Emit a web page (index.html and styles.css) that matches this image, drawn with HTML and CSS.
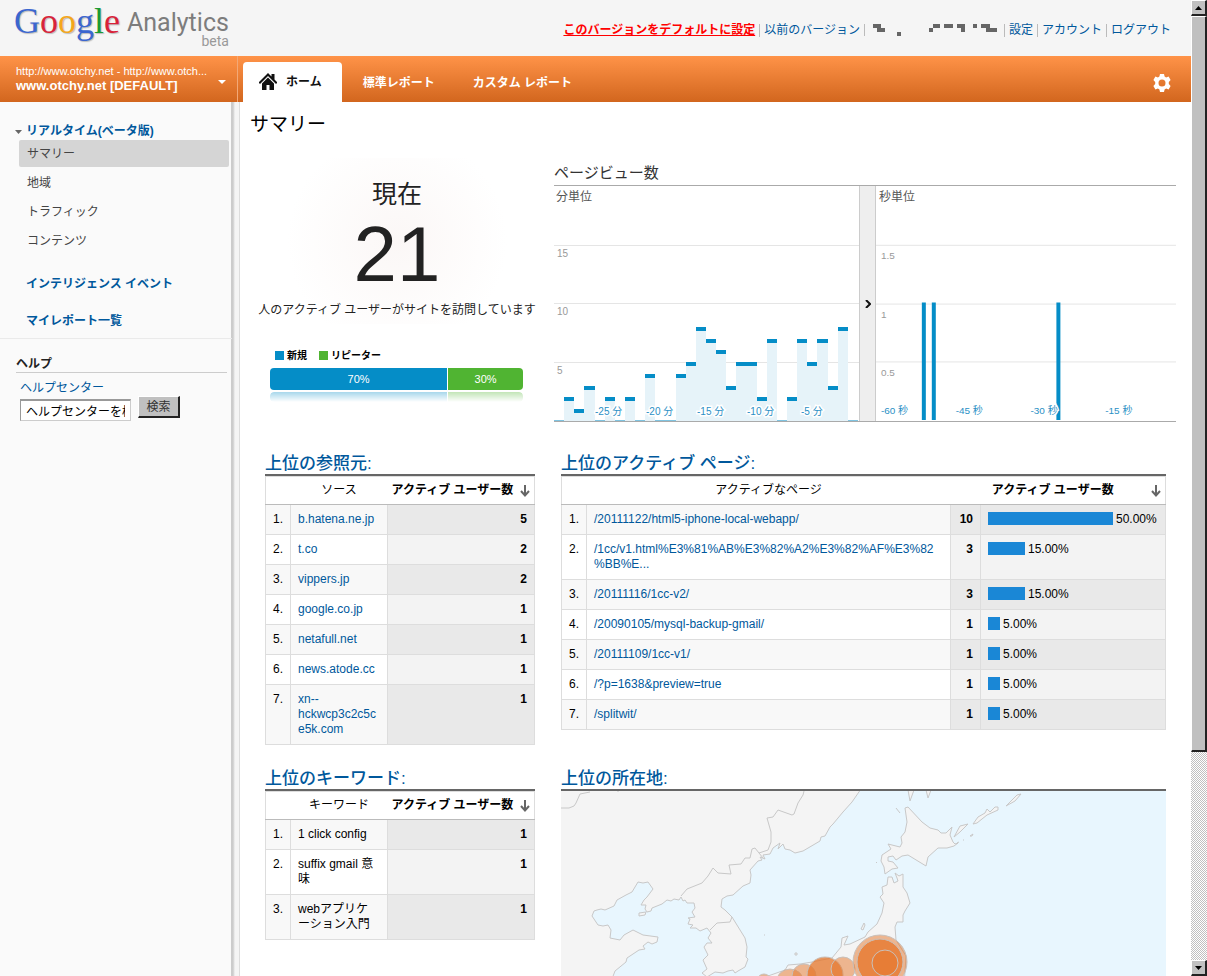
FILE: index.html
```html
<!DOCTYPE html>
<html lang="ja">
<head>
    <meta charset="UTF-8">
    <meta name="viewport" content="width=device-width, initial-scale=1.0">
    <title>サマリー - Google Analytics</title>
    <link rel="stylesheet" href="styles.css">
</head>
<body>
<div class="page">
    <header class="header">
        <a class="logo" href="#">
            <span class="google"><span class="blue">G</span><span class="red">o</span><span class="yellow">o</span><span class="blue">g</span><span class="green">l</span><span class="red">e</span></span>
            <span class="product">Analytics<span class="beta">beta</span></span>
        </a>
        <ul class="user-links">
            <li><a class="default-link" href="#">このバージョンをデフォルトに設定</a></li>
            <li><a href="#">以前のバージョン</a></li>
            <li>
                <svg class="account-mask" width="126" height="12" viewBox="0 0 126 12" fill="#666" shape-rendering="crispEdges">
                    <path d="M0 0h8v4h4v4H4V4H0zM24 8h4v4h-4zM56 4h4V0h7v4h-7v4h-4zM71 0h9v4h-9zM84 0h8v8h-4V4h-4zM100 0h4v4h-4zM108 0h9v4h7v4h-11V4h-5z"/>
                </svg>
            </li>
            <li><a href="#">設定</a></li>
            <li><a href="#">アカウント</a></li>
            <li><a href="#">ログアウト</a></li>
        </ul>
    </header>

    <nav class="nav">
        <button class="profile" type="button">
            <span class="profile-text">
                <span class="profile-url">http://www.otchy.net - http://www.otch...</span>
                <span class="profile-name">www.otchy.net [DEFAULT]</span>
            </span>
            <svg width="8" height="4" viewBox="0 0 8 4"><path d="M0 0h8L4 4z" fill="#fff"/></svg>
        </button>
        <a class="tab active" href="#">
            <svg width="18" height="18" viewBox="0 0 18 18" fill="#111">
                <path d="M9 0l3.500 3.500V1h3V6.500L18.500 9.500 17 11 9 3 1 11-.5 9.500z"/>
                <path d="M9 4.500l6 6V17h-4.500v-5h-3v5H3v-6.500z"/>
            </svg>
            ホーム
        </a>
        <a class="tab" href="#">標準レポート</a>
        <a class="tab" href="#">カスタム レポート</a>
        <button class="gear" type="button" aria-label="設定">
            <svg width="18" height="18" viewBox="0 0 18 18">
                <path fill="#fff" fill-rule="evenodd" d="M7 0h4l.6 2.500 1.500.9 2.500-.8 2 3.400L15.800 8v2l1.800 2-2 3.400-2.500-.8-1.500.9L11 18H7l-.6-2.500-1.500-.9-2.500.8-2-3.400L2.200 10V8L.4 6l2-3.400 2.500.8 1.500-.9zM9 5.500a3.500 3.500 0 1 0 0 7 3.500 3.500 0 0 0 0-7z"/>
            </svg>
        </button>
    </nav>

    <div class="body">
        <aside class="sidebar">
            <div class="menu">
                <a class="menu-title open" href="#">
                    <svg width="7" height="4" viewBox="0 0 7 4"><path d="M0 0h7L3.500 4z" fill="#666"/></svg>
                    リアルタイム(ベータ版)
                </a>
                <ul class="submenu">
                    <li><a class="current" href="#">サマリー</a></li>
                    <li><a href="#">地域</a></li>
                    <li><a href="#">トラフィック</a></li>
                    <li><a href="#">コンテンツ</a></li>
                </ul>
                <a class="menu-title" href="#">インテリジェンス イベント</a>
                <a class="menu-title" href="#">マイレポート一覧</a>
            </div>
            <div class="help">
                <h2>ヘルプ</h2>
                <form class="help-form">
                    <a href="#">ヘルプセンター</a>
                    <div class="help-search">
                        <input type="text" aria-label="ヘルプセンターを検索" value="ヘルプセンターを検索">
                        <button type="button">検索</button>
                    </div>
                </form>
            </div>
        </aside>

        <main class="main">
            <h1>サマリー</h1>

            <div class="overview">
                <section class="now">
                    <div class="counter">
                        <div class="now-label">現在</div>
                        <div class="now-count">21</div>
                        <div class="now-text">人のアクティブ ユーザーがサイトを訪問しています</div>
                    </div>
                    <div class="visitors">
                        <div class="legend">
                            <span class="key key-new">新規</span>
                            <span class="key key-return">リピーター</span>
                        </div>
                        <div class="split">
                            <div class="split-new" style="width: 70%">70%</div>
                            <div class="split-return">30%</div>
                        </div>
                        <div class="reflection">
                            <div class="split-new" style="width: 70%"></div>
                            <div class="split-return"></div>
                        </div>
                    </div>
                </section>

                <section class="pageviews">
                    <h2>ページビュー数</h2>
                    <div class="charts">
                        <svg class="chart" viewBox="0 0 305 235">
                            <path class="grid" d="M0 59.500h305M0 117.500h305M0 176.500h305"/>
                            <path class="area" d="M10 235V211H20V223H30V200H41V235H51V211H61V235H71V211H81V235H91V188H101V235H122V188H132V176H142V141H152V153H162V164H172V200H182V176H203V211H213V153H223V235H233V211H243V153H253V176H263V153H274V200H284V141H294V235z"/>
                            <path class="cap" d="M10 213h10M20 225h10M30 202h11M51 213h10M71 213h10M91 190h10M122 190h10M132 178h10M142 143h10M152 155h10M162 166h10M172 202h10M182 178h21M203 213h10M213 155h10M233 213h10M243 155h10M253 178h10M263 155h11M274 202h10M284 143h10"/>
                            <path class="zero" d="M0 234.500h10M41 234.500h10M61 234.500h10M81 234.500h10M101 234.500h21M223 234.500h10M294 234.500h10"/>
                            <text class="unit" x="2" y="15">分単位</text>
                            <text class="y-label" x="3" y="71">15</text>
                            <text class="y-label" x="3" y="129">10</text>
                            <text class="y-label" x="3" y="188">5</text>
                            <text class="x-label" x="41" y="229">-25 分</text>
                            <text class="x-label" x="92" y="229">-20 分</text>
                            <text class="x-label" x="143" y="229">-15 分</text>
                            <text class="x-label" x="193" y="229">-10 分</text>
                            <text class="x-label" x="247" y="229">-5 分</text>
                        </svg>
                        <button class="toggle" type="button" aria-label="切り替え">
                            <svg width="6" height="8" viewBox="0 0 6 8"><path d="M1 0l4 4-4 4" fill="none" stroke="#111" stroke-width="2"/></svg>
                        </button>
                        <svg class="chart" viewBox="0 0 301 235">
                            <path class="grid" d="M0 59.500h301M0 118.500h301M0 176.500h301"/>
                            <path class="second" d="M48 117v118M58 117v118M183 117v118"/>
                            <text class="unit" x="3" y="15">秒単位</text>
                            <text class="y-label" x="5" y="73">1.5</text>
                            <text class="y-label" x="5" y="132">1</text>
                            <text class="y-label" x="5" y="191">0.5</text>
                            <text class="x-label" x="5" y="229">-60 秒</text>
                            <text class="x-label" x="80" y="229">-45 秒</text>
                            <text class="x-label" x="155" y="229">-30 秒</text>
                            <text class="x-label" x="230" y="229">-15 秒</text>
                        </svg>
                    </div>
                </section>
            </div>

            <div class="panels">
                <section>
                    <h3><a href="#">上位の参照元:</a></h3>
                    <table class="sources">
                        <thead>
                            <tr>
                                <th class="rank"></th>
                                <th>ソース</th>
                                <th class="sorted"><span class="sort">アクティブ ユーザー数 <svg width="10" height="12" viewBox="0 0 10 12"><path d="M5 0v10M1 6l4 4.500L9 6"/></svg></span></th>
                            </tr>
                        </thead>
                        <tbody>
                            <tr><td>1.</td><td><a href="#">b.hatena.ne.jp</a></td><td class="num">5</td></tr>
                            <tr><td>2.</td><td><a href="#">t.co</a></td><td class="num">2</td></tr>
                            <tr><td>3.</td><td><a href="#">vippers.jp</a></td><td class="num">2</td></tr>
                            <tr><td>4.</td><td><a href="#">google.co.jp</a></td><td class="num">1</td></tr>
                            <tr><td>5.</td><td><a href="#">netafull.net</a></td><td class="num">1</td></tr>
                            <tr><td>6.</td><td><a href="#">news.atode.cc</a></td><td class="num">1</td></tr>
                            <tr><td>7.</td><td><a href="#">xn--<wbr>hckwcp3c2c5c<wbr>e5k.com</a></td><td class="num">1</td></tr>
                        </tbody>
                    </table>
                </section>

                <section>
                    <h3><a href="#">上位のアクティブ ページ:</a></h3>
                    <table class="pages">
                        <colgroup><col class="rank"><col><col class="count"><col class="share"></colgroup>
                        <thead>
                            <tr>
                                <th></th>
                                <th>アクティブなページ</th>
                                <th class="sorted" colspan="2"><span class="sort">アクティブ ユーザー数 <svg width="10" height="12" viewBox="0 0 10 12"><path d="M5 0v10M1 6l4 4.500L9 6"/></svg></span></th>
                            </tr>
                        </thead>
                        <tbody>
                            <tr><td>1.</td><td><a href="#">/20111122/html5-iphone-local-webapp/</a></td><td class="num">10</td><td class="pct"><span class="bar" style="width: 125px"></span>50.00%</td></tr>
                            <tr><td>2.</td><td><a href="#">/1cc/v1.html%E3%81%AB%E3%82%A2%E3%82%AF%E3%82<wbr>%BB%E...</a></td><td class="num">3</td><td class="pct"><span class="bar" style="width: 37px"></span>15.00%</td></tr>
                            <tr><td>3.</td><td><a href="#">/20111116/1cc-v2/</a></td><td class="num">3</td><td class="pct"><span class="bar" style="width: 37px"></span>15.00%</td></tr>
                            <tr><td>4.</td><td><a href="#">/20090105/mysql-backup-gmail/</a></td><td class="num">1</td><td class="pct"><span class="bar" style="width: 12px"></span>5.00%</td></tr>
                            <tr><td>5.</td><td><a href="#">/20111109/1cc-v1/</a></td><td class="num">1</td><td class="pct"><span class="bar" style="width: 12px"></span>5.00%</td></tr>
                            <tr><td>6.</td><td><a href="#">/?p=1638&amp;preview=true</a></td><td class="num">1</td><td class="pct"><span class="bar" style="width: 12px"></span>5.00%</td></tr>
                            <tr><td>7.</td><td><a href="#">/splitwit/</a></td><td class="num">1</td><td class="pct"><span class="bar" style="width: 12px"></span>5.00%</td></tr>
                        </tbody>
                    </table>
                </section>

                <section>
                    <h3><a href="#">上位のキーワード:</a></h3>
                    <table class="sources">
                        <thead>
                            <tr>
                                <th class="rank"></th>
                                <th>キーワード</th>
                                <th class="sorted"><span class="sort">アクティブ ユーザー数 <svg width="10" height="12" viewBox="0 0 10 12"><path d="M5 0v10M1 6l4 4.500L9 6"/></svg></span></th>
                            </tr>
                        </thead>
                        <tbody>
                            <tr><td>1.</td><td>1 click config</td><td class="num">1</td></tr>
                            <tr><td>2.</td><td>suffix gmail 意味</td><td class="num">1</td></tr>
                            <tr><td>3.</td><td>webアプリケーション入門</td><td class="num">1</td></tr>
                        </tbody>
                    </table>
                </section>

                <section>
                    <h3><a href="#">上位の所在地:</a></h3>
                    <svg class="map" viewBox="0 0 605 300">
                        <g class="land">
                            <!-- mainland and Korea -->
                            <path d="M-2 -2H300L291 11 282 21 272 33 269 36 264 45 260 46 259 50 242 60 234 62 229 59 224 58 222 53 217 58 219 52 212 57 209 63 202 64 204 68 199 66 201 69 197 70 189 79 190 84 189 92 182 95 172 104 166 105 161 108 160 116 164 119 171 126 184 147 186 156 185 166 187 168 184 176 177 180 174 182 172 179 167 180 162 182 154 181 146 186 141 182 146 178 142 169 147 164 143 156 146 152 151 152 147 147 150 142 146 137 139 140 135 137 129 137 132 134 127 133 129 128 127 127 134 126 131 121 134 117 133 112 126 112 124 109 122 110 120 106 118 109 113 108 110 110 106 109 101 113 91 117 90 120 86 121 84 118 85 114 80 114 83 109 86 106 92 98 87 91 82 92 77 91 71 101 65 104 56 109 53 115 44 119 40 118 36 119 33 120 31 125 37 134 42 135 47 134 50 139 49 147 59 149 63 144 72 139 82 144 97 146 96 151 91 153 87 151 82 155 84 158 78 159 66 167 65 171 54 180 51 188 40 230H-2z"/>
                            <path d="M78 122l7-1-1 3-6 1z"/>
                            <!-- Hokkaido -->
                            <path d="M344 17L347 16 361 31 369 37 377 39 380 42 385 42 391 36 389 44 392 51 394 53 397 52 393 55 386 57 377 57 367 66 365 75 347 64 341 65 335 69 332 65 327 66 327 70 332 71 337 77 331 78 324 83 323 76 320 70 321 64 330 58 327 53 339 56 341 52 340 46 344 41 346 31z"/>
                            <!-- Honshu -->
                            <path d="M334 82L338 85 342 83 342 96 346 102 349 112 344 120 342 124 342 131 336 131 334 136 335 149 345 165 342 210 200 230 207 185 224 179 227 174 239 173 251 171 271 167 280 156 281 147 287 145 283 154 289 153 304 146 307 141 316 133 321 122 323 112 319 106 322 103 321 96 326 94 327 86 331 86 333 92 337 90 336 87z"/>
                            <path d="M393 46L399 35 407 33 399 41zM412 33L417 26 424 22 426 18 429 21 434 16 437 16 437 19 426 24 416 32zM445 15L456 4 460 3 454 10zM347 -1L349 10 353 -1M365 -1L367 7 370 -1M335 17l4 5M300 138l3-6 1 2-2 5zM409 45l3-2-1 2zM396 52l2-1M402 49l1 0M315 71l1 1M203 144l1 0M234 162h2v2h-2z"/>
                        </g>
                        <path class="border" d="M0 17H8L13 15 15 12 19 3 29 1M56 0l2 0M243 0L242 4 237 12 233 23 231 24 217 19 212 26 206 27 210 41 210 51 207 59 198 62 194 57 191 58 189 67 184 67 180 73 168 74 170 83 157 82 152 77 147 85 141 92 126 98 120 105M149 139L156 132 169 131 171 126M198 62l4 5"/>
                        <g class="bubble">
                            <circle cx="203" cy="190" r="7"/>
                            <circle cx="229" cy="192" r="14"/>
                            <circle cx="243" cy="185" r="12"/>
                            <circle class="strong" cx="264" cy="184" r="18"/>
                            <circle cx="282" cy="178" r="12"/>
                            <circle cx="319" cy="171" r="27"/>
                            <circle class="strong" cx="319" cy="171" r="23"/>
                            <circle cx="324" cy="172" r="13"/>
                        </g>
                    </svg>
                </section>
            </div>
        </main>
    </div>
</div>

<div class="scrollbar">
    <button type="button" aria-label="上へ"><svg width="7" height="4" viewBox="0 0 7 4"><path d="M0 4h7L3.500 0z"/></svg></button>
    <div class="thumb"></div>
    <div class="track"></div>
    <button type="button" aria-label="下へ"><svg width="7" height="4" viewBox="0 0 7 4"><path d="M0 0h7L3.500 4z"/></svg></button>
</div>
</body>
</html>
```
FILE: styles.css
```css
*{
    box-sizing: border-box;
}
body{
    margin: 0;
    display: flex;
    height: 100vh;
    overflow: hidden;
    background: #fff;
    color: #000;
    font-family: "Liberation Sans", "Noto Sans CJK JP", sans-serif;
    font-size: 12px;
    line-height: 15px;
}
a{
    color: #00589c;
    text-decoration: none;
}
button{
    font: inherit;
    border: 0;
    padding: 0;
    background: none;
    cursor: pointer;
}
ul{
    list-style: none;
    margin: 0;
    padding: 0;
}
h1, h2, h3{
    margin: 0;
}
svg{
    display: block;
}
.page{
    flex: 1;
    min-width: 0;
    display: flex;
    flex-direction: column;
}

/* header */
.header{
    flex: none;
    height: 56px;
    display: flex;
    justify-content: space-between;
    align-items: center;
    padding: 0 20px 0 14px;
    background: #f5f5f5;
}
.logo{
    align-self: flex-start;
    display: flex;
    align-items: flex-start;
    gap: 7px;
    padding-top: 3px;
}
.google{
    font-family: "Liberation Serif", serif;
    font-size: 36px;
    line-height: 36px;
    text-shadow: 1px 1px 1px #bbb;
}
.blue{ color: #3b66cf; }
.red{ color: #d8233a; }
.yellow{ color: #f4a71c; }
.green{ color: #1a9b33; }
.product{
    display: flex;
    flex-direction: column;
    align-items: flex-end;
    padding-top: 6px;
    font-family: Roboto, sans-serif;
    font-size: 25px;
    line-height: 28px;
    color: #7d7d7d;
}
.beta{
    font-size: 14px;
    line-height: 8px;
    color: #999;
}
.user-links{
    display: flex;
    align-items: center;
    padding-top: 4px;
    white-space: nowrap;
}
.user-links li{
    padding: 0 4px;
    border-left: 1px solid #bbb;
    line-height: 13px;
}
.user-links li:first-child{
    border-left: 0;
}
.user-links li:last-child{
    padding-right: 0;
}
.user-links .default-link{
    color: #f00;
    font-weight: bold;
    text-decoration: underline;
}
.account-mask{
    margin: 0 1px 0 4px;
}

/* orange bar */
.nav{
    flex: none;
    height: 46px;
    display: flex;
    align-items: flex-end;
    background: linear-gradient(#ff9348, #d2661e);
}
.profile{
    width: 238px;
    height: 46px;
    display: flex;
    align-items: center;
    justify-content: space-between;
    padding: 0 11px 0 16px;
    margin-right: 5px;
    border-right: 1px solid #f3a876;
    color: #fff;
    text-align: left;
    white-space: nowrap;
}
.profile svg{
    margin-top: 6px;
}
.profile-text{
    display: flex;
    flex-direction: column;
}
.profile-url{
    font-size: 11px;
    line-height: 13px;
}
.profile-name{
    font-size: 13px;
    line-height: 15px;
    font-weight: bold;
}
.tab{
    height: 40px;
    display: flex;
    align-items: center;
    gap: 9px;
    padding: 2px 23px 0 15px;
    color: #fff;
    font-weight: bold;
}
.tab.active{
    padding: 0 20px 0 16px;
    margin-right: 6px;
    border-radius: 4px 4px 0 0;
    background: #fff;
    color: #111;
}
.gear{
    margin: 0 20px 10px auto;
}

/* left column */
.body{
    flex: 1;
    min-height: 0;
    display: flex;
}
.sidebar{
    flex: none;
    width: 240px;
    padding-right: 5px;
    border-right: 1px solid #ddd;
    background: linear-gradient(90deg, #fafafa 231px, #ccc 231px, #ccc 233px, #f5f5f5 235px);
}
.menu{
    padding: 22px 3px 0 16px;
    margin-right: 2px;
    border-bottom: 1px solid #eaeaea;
}
.menu-title{
    display: block;
    padding: 9px 10px 13px;
    font-weight: bold;
}
.menu-title:last-child{
    padding-bottom: 9px;
}
.menu-title.open{
    display: flex;
    align-items: center;
    gap: 4px;
    padding: 0 0 1px;
}
.menu-title.open svg{
    margin-left: -1px;
}
.submenu{
    display: flex;
    flex-direction: column;
    gap: 2px;
    padding: 0 0 14px 3px;
}
.submenu a{
    display: block;
    padding: 7px 8px 5px;
    border-radius: 2px;
    color: #444;
}
.submenu .current{
    background: #d5d5d5;
}
.help{
    padding: 17px 7px 0 16px;
}
.help h2{
    border-bottom: 1px solid #ccc;
    font-size: 12px;
    line-height: 16px;
    color: #222;
}
.help-form{
    padding: 8px 4px;
}
.help-search{
    display: flex;
    align-items: flex-start;
    gap: 7px;
}
.help-search input{
    width: 111px;
    height: 22px;
    margin-top: 3px;
    padding: 0 5px;
    border: 1px solid #ccc;
    border-top: 2px solid #999;
    border-left-color: #999;
    font: inherit;
}
.help-search button{
    width: 42px;
    height: 22px;
    padding-top: 2px;
    border: 1px solid #fff;
    border-right: 2px solid #222;
    border-bottom: 2px solid #222;
    background: #c0c0c0;
    color: #333;
}

/* main column */
.main{
    flex: 1;
    min-width: 0;
}
h1{
    padding: 10px 10px 0;
    font-size: 19px;
    line-height: 26px;
    font-weight: normal;
}
.overview{
    display: flex;
    gap: 11px;
    padding: 20px 15px 28px 11px;
}
.now{
    flex: none;
    width: 292px;
    text-align: center;
}
.counter{
    padding-top: 18px;
    color: #222;
    background: radial-gradient(circle at 50% 50%, #fbf7f6, #fff 110px);
}
.now-label{
    font-size: 25px;
    line-height: 36px;
}
.now-count{
    font-size: 78px;
    line-height: 84px;
}
.now-text{
    font-size: 12px;
    line-height: 28px;
    white-space: nowrap;
}
.visitors{
    padding: 24px 20px 0 19px;
}
.legend{
    display: flex;
    gap: 12px;
    padding: 0 5px 5px;
    font-size: 10px;
    font-weight: bold;
}
.key{
    display: flex;
    align-items: center;
    gap: 3px;
}
.key::before{
    content: "";
    width: 9px;
    height: 9px;
    background: #058dc7;
}
.key-return::before{
    background: #50b432;
}
.split, .reflection{
    display: flex;
    gap: 1px;
    border-radius: 4px;
    overflow: hidden;
    color: #fff;
    font-size: 11px;
    line-height: 22px;
}
.split-new{
    background: #058dc7;
}
.split-return{
    flex: 1;
    background: #50b432;
}
.reflection{
    height: 10px;
    margin-top: 2px;
    opacity: 0.35;
    -webkit-mask-image: linear-gradient(#000, transparent);
    mask-image: linear-gradient(#000, transparent);
}
.pageviews{
    flex: 1;
    min-width: 0;
}
.pageviews h2{
    padding-top: 2px;
    font-size: 15px;
    line-height: 25px;
    font-weight: normal;
    color: #333;
}
.charts{
    display: grid;
    grid-template-columns: 305fr 17px 300fr;
    border-top: 1px solid #aaa;
    border-bottom: 1px solid #aaa;
}
.chart{
    width: 100%;
}
.toggle{
    display: flex;
    align-items: center;
    justify-content: center;
    border: 1px solid #ccc;
    border-width: 0 1px;
    background: #eee;
}
.grid{
    stroke: #e5e5e5;
}
.area{
    fill: #e6f3f9;
}
.cap{
    fill: none;
    stroke: #058dc7;
    stroke-width: 4px;
}
.zero{
    stroke: #7fc3e0;
}
.second{
    stroke: #058dc7;
    stroke-width: 4px;
}
.unit{
    font-size: 12px;
    fill: #555;
}
.y-label{
    font-size: 10px;
    fill: #999;
}
.x-label{
    font-size: 10px;
    fill: #2a8fc5;
    stroke: #fff;
    stroke-width: 3px;
    paint-order: stroke;
}

/* report tables */
.panels{
    display: grid;
    grid-template-columns: 270px 1fr;
    gap: 20px 26px;
    padding: 0 25px;
}
h3{
    padding-top: 3px;
    border-bottom: 2px solid #666;
    font-size: 17px;
    line-height: 21px;
    font-weight: 500;
}
table{
    width: 100%;
    table-layout: fixed;
    border-collapse: collapse;
    border: 1px solid #ddd;
}
th{
    height: 28px;
    padding: 0 4px;
    border-bottom: 1px solid #bbb;
    font-weight: normal;
}
th.sorted{
    font-weight: bold;
    white-space: nowrap;
}
.rank{
    width: 25px;
}
.count{
    width: 30px;
}
.share{
    width: 185px;
}
.sources .sorted{
    width: 147px;
}
.sort{
    display: flex;
    align-items: center;
}
.sort svg{
    margin-left: auto;
    fill: none;
    stroke: #666;
    stroke-width: 2px;
}
.pages .sort::before{
    content: "";
    margin-left: auto;
}
td{
    padding: 7px;
    border: 1px solid #ddd;
    vertical-align: top;
    overflow-wrap: anywhere;
}
tbody tr:nth-child(odd){
    background: #f8f8f8;
}
.num, .pct{
    background: #f3f3f3;
}
tr:nth-child(odd) .num, tr:nth-child(odd) .pct{
    background: #e9e9e9;
}
.num{
    font-weight: bold;
    text-align: right;
}
.pct{
    white-space: nowrap;
}
.bar{
    display: inline-block;
    height: 13px;
    margin-right: 3px;
    background: #1a87d6;
    vertical-align: top;
}

/* map */
.map{
    width: 100%;
    background: #e8f6fe;
}
.land{
    fill: #f4f4f4;
    stroke: #c8c8c8;
}
.border{
    fill: none;
    stroke: #c8c8c8;
}
.bubble{
    fill: #e5762a;
    fill-opacity: 0.5;
    stroke: #c9c0ba;
}
.strong{
    fill-opacity: 0.75;
}

/* window scrollbar */
.scrollbar{
    flex: none;
    width: 16px;
    display: flex;
    flex-direction: column;
}
.scrollbar button, .thumb{
    border: 1px solid #fff;
    border-right: 2px solid #222;
    border-bottom: 2px solid #222;
    background: #c0c0c0;
}
.scrollbar button{
    flex: none;
    height: 16px;
    display: flex;
    align-items: center;
    justify-content: center;
}
.thumb{
    flex: 735;
}
.track{
    flex: 209;
    background: repeating-conic-gradient(#c0c0c0 0 25%, #fff 0 50%) 0 0 / 2px 2px;
}
```
